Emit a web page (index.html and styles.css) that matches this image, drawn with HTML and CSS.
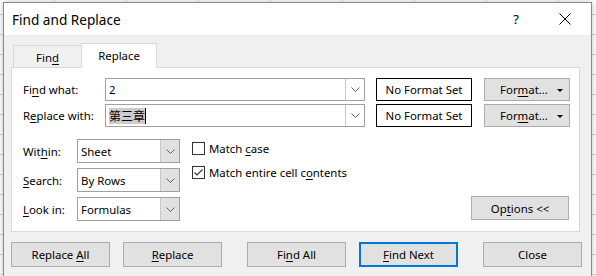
FILE: index.html
```html
<!DOCTYPE html>
<html>
<head>
<meta charset="utf-8">
<link rel="stylesheet" href="styles.css">
</head>
<body>
<div class="dialog">
  <div class="titlebar">
    <span class="title">Find and Replace</span>
    <span class="help">?</span>
    <svg class="close-x" width="12" height="12" viewBox="0 0 12 12"><path d="M0.5 0.5 L11.5 11.5 M11.5 0.5 L0.5 11.5" stroke="#000" stroke-width="1" fill="none"/></svg>
  </div>
  <div class="body">
    <div class="tabs">
      <div class="tab"><span>Fin<u>d</u></span></div>
      <div class="tab active"><span>Replace</span></div>
    </div>
    <div class="panel">
      <div class="row">
        <span class="label wide">Fi<u>n</u>d what:</span>
        <div class="combo">
          <span class="combo-text">2</span>
          <span class="combo-btn"><svg width="9" height="5" viewBox="0 0 9 5"><polyline points="0.5,0.5 4.5,4.5 8.5,0.5" fill="none" stroke="#606060" stroke-width="1"/></svg></span>
        </div>
        <span class="fmtbox"><span>No Format Set</span></span>
        <span class="btn fmtbtn"><span>For<u>m</u>at...</span><span class="tri"></span></span>
      </div>
      <div class="row row2">
        <span class="label wide">R<u>e</u>place with:</span>
        <div class="combo">
          <span class="combo-text"><span class="sel">第三章</span><span class="caret"></span></span>
          <span class="combo-btn"><svg width="9" height="5" viewBox="0 0 9 5"><polyline points="0.5,0.5 4.5,4.5 8.5,0.5" fill="none" stroke="#606060" stroke-width="1"/></svg></span>
        </div>
        <span class="fmtbox"><span>No Format Set</span></span>
        <span class="btn fmtbtn"><span>For<u>m</u>at...</span><span class="tri"></span></span>
      </div>
      <div class="lower">
        <div class="selects">
          <div class="srow"><span class="label">Wit<u>h</u>in:</span><div class="select"><span class="select-text">Sheet</span><span class="select-btn"><svg width="9" height="5" viewBox="0 0 9 5"><polyline points="0.5,0.5 4.5,4.5 8.5,0.5" fill="none" stroke="#606060" stroke-width="1"/></svg></span></div></div>
          <div class="srow"><span class="label"><u>S</u>earch:</span><div class="select"><span class="select-text">By Rows</span><span class="select-btn"><svg width="9" height="5" viewBox="0 0 9 5"><polyline points="0.5,0.5 4.5,4.5 8.5,0.5" fill="none" stroke="#606060" stroke-width="1"/></svg></span></div></div>
          <div class="srow"><span class="label"><u>L</u>ook in:</span><div class="select"><span class="select-text">Formulas</span><span class="select-btn"><svg width="9" height="5" viewBox="0 0 9 5"><polyline points="0.5,0.5 4.5,4.5 8.5,0.5" fill="none" stroke="#606060" stroke-width="1"/></svg></span></div></div>
        </div>
        <div class="checks">
          <div class="crow"><span class="box"></span><span>Match <u>c</u>ase</span></div>
          <div class="crow"><span class="box"><svg width="11" height="11" viewBox="0 0 11 11"><polyline points="1.5,5.5 4,8 9.5,2.5" fill="none" stroke="#333" stroke-width="1.2"/></svg></span><span>Match entire cell c<u>o</u>ntents</span></div>
        </div>
        <span class="btn options"><span>Op<u>t</u>ions &lt;&lt;</span></span>
      </div>
    </div>
    <div class="buttons">
      <span class="btn b1"><span>Replace <u>A</u>ll</span></span>
      <span class="btn b2"><span><u>R</u>eplace</span></span>
      <span class="btn b3"><span>Fi<u>n</u>d All</span></span>
      <span class="btn b4 default"><span><u>F</u>ind Next</span></span>
      <span class="btn b5"><span>Close</span></span>
    </div>
  </div>
</div>
<svg class="scribble" width="596" height="276" viewBox="0 0 596 276"><path d="M192 180 C 215 184, 250 185, 285 185 S 325 187, 340 186" fill="none" stroke="#18e018" stroke-width="3" stroke-linecap="round"/></svg>
</body>
</html>
```
FILE: styles.css
```css
html, body {
  margin: 0;
  padding: 0;
}
body {
  width: 596px;
  height: 276px;
  overflow: hidden;
  position: relative;
  background-color: #fff;
  background-image:
    repeating-linear-gradient(to right, transparent 0, transparent 54px, #d4d4d4 54px, #d4d4d4 55px, transparent 55px, transparent 72px),
    repeating-linear-gradient(to bottom, transparent 0, transparent 14px, #d4d4d4 14px, #d4d4d4 15px, transparent 15px, transparent 20px);
  font-family: "Noto Sans", sans-serif;
  font-size: 11.4px;
  color: #000;
}
u { text-decoration: underline; text-underline-offset: 2px; text-decoration-thickness: 1px; }
.dialog {
  margin: 2px 0 0 3px;
  width: 587px;
  height: 273px;
  border: 1px solid #8a8a8a;
  border-bottom: none;
  background: #f0f0f0;
  box-shadow: 0 0 6px rgba(0,0,0,0.25);
}
.titlebar {
  height: 32px;
  background: #fff;
  display: flex;
  align-items: center;
  padding-left: 8px;
}
.title {
  font-size: 13.6px;
  flex: 1;
}
.help {
  font-size: 13px;
  width: 12px;
  margin-right: 37px;
  text-align: center;
}
.close-x { margin-right: 20px; }
.body {
  padding-top: 8px;
}
.tabs {
  display: flex;
  align-items: flex-end;
  height: 24px;
  padding-left: 9px;
  position: relative;
  z-index: 2;
}
.tab {
  height: 22px;
  width: 68px;
  border: 1px solid #d9d9d9;
  border-bottom: none;
  border-right: none;
  box-sizing: border-box;
  display: flex;
  align-items: center;
  justify-content: center;
  padding-top: 1px;
}
.tab.active {
  height: 25px;
  width: 76px;
  background: #fff;
  border-right: 1px solid #d9d9d9;
  margin-bottom: -1px;
  padding-bottom: 2px;
}
.panel {
  margin-left: 7px;
  width: 569px;
  height: 165px;
  box-sizing: border-box;
  background: #fff;
  border: 1px solid #d9d9d9;
  padding: 10px 10px 0 11px;
  position: relative;
  z-index: 1;
}
.row {
  display: flex;
  align-items: center;
  height: 23px;
}
.row2 { margin-top: 3px; }
.label { width: 54px; flex: none; }
.label.wide { width: 82px; }
.combo {
  width: 260px;
  height: 23px;
  box-sizing: border-box;
  border: 1px solid #a0a0a0;
  display: flex;
  flex: none;
}
.combo-text {
  flex: 1;
  display: flex;
  align-items: center;
  padding-left: 3px;
}
.sel {
  background: #cccccc;
  font-family: "Noto Sans CJK SC", sans-serif;
  font-size: 12px;
  line-height: 16px;
  height: 16px;
}
.caret {
  display: inline-block;
  width: 1px;
  height: 16px;
  background: #000;
}
.combo-btn {
  width: 18px;
  border-left: 1px solid #c8c8c8;
  display: flex;
  align-items: center;
  justify-content: center;
}
.fmtbox {
  margin-left: 11px;
  width: 96px;
  height: 23px;
  box-sizing: border-box;
  border: 1px solid #000;
  display: flex;
  align-items: center;
  justify-content: center;
  flex: none;
}
.btn {
  box-sizing: border-box;
  background: #e1e1e1;
  border: 1px solid #adadad;
  display: flex;
  align-items: center;
  justify-content: center;
  flex: none;
}
.fmtbtn {
  margin-left: 12px;
  width: 86px;
  height: 23px;
  position: relative;
  padding-right: 6px;
}
.tri {
  position: absolute;
  right: 6px;
  top: 10px;
  width: 0;
  height: 0;
  border-left: 3px solid transparent;
  border-right: 3px solid transparent;
  border-top: 3px solid #000;
}
.lower {
  display: flex;
  margin-top: 12px;
}
.selects {
  display: flex;
  flex-direction: column;
  gap: 5px;
}
.srow {
  display: flex;
  align-items: center;
  height: 24px;
}
.select {
  width: 103px;
  height: 24px;
  box-sizing: border-box;
  border: 1px solid #a0a0a0;
  display: flex;
}
.select-text {
  flex: 1;
  display: flex;
  align-items: center;
  padding-left: 3px;
}
.select-btn {
  width: 18px;
  background: #e1e1e1;
  border-left: 1px solid #c8c8c8;
  display: flex;
  align-items: center;
  justify-content: center;
}
.checks {
  margin-left: 12px;
  padding-top: 3px;
  display: flex;
  flex-direction: column;
  gap: 11px;
}
.crow {
  display: flex;
  align-items: center;
  height: 13px;
  gap: 4px;
}
.box {
  width: 13px;
  height: 13px;
  box-sizing: border-box;
  border: 1px solid #333;
  display: flex;
  align-items: center;
  justify-content: center;
  background: #fff;
}
.options {
  margin-left: auto;
  align-self: flex-end;
  margin-bottom: 1px;
  width: 98px;
  height: 24px;
}
.buttons {
  display: flex;
  margin-top: 10px;
  padding-left: 7px;
}
.buttons .btn {
  width: 99px;
  height: 25px;
}
.b2 { margin-left: 13px; }
.b3 { margin-left: 25px; }
.b4 { margin-left: 13px; }
.b5 { margin-left: 25px; }
.btn.default {
  border: 2px solid #0078d7;
}
.scribble {
  position: absolute;
  left: 0;
  top: 0;
  pointer-events: none;
}
```
